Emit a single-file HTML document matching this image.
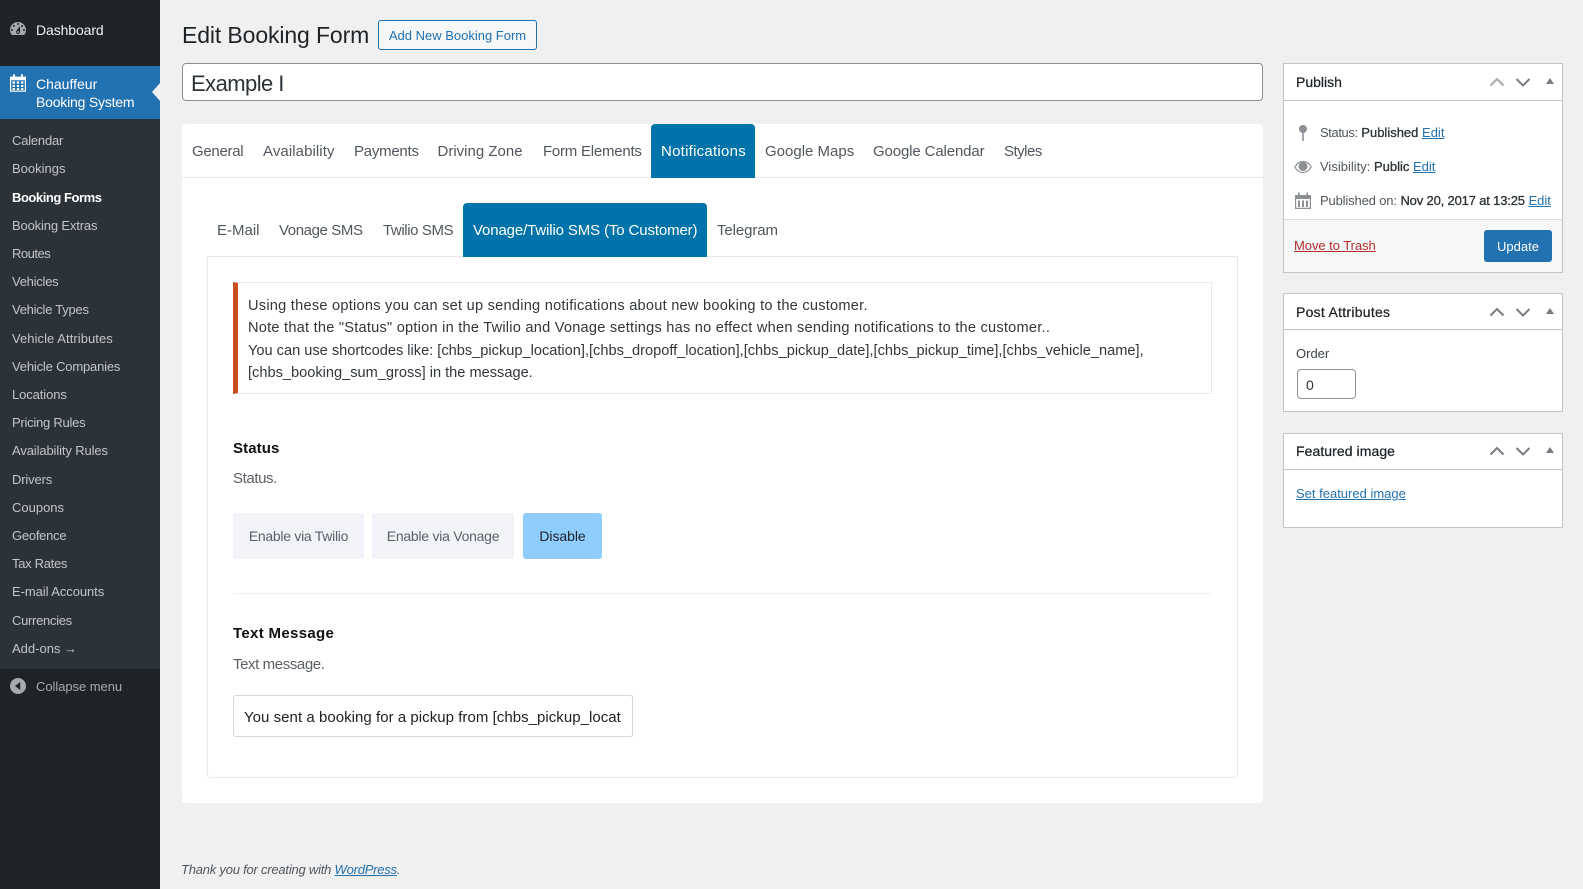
<!DOCTYPE html>
<html lang="en"><head><meta charset="utf-8"><title>Edit Booking Form</title>
<style>
*{box-sizing:border-box}
html,body{margin:0;padding:0}
body{width:1583px;height:889px;overflow:hidden;position:relative;background:#f0f0f1;font-family:"Liberation Sans",Arial,sans-serif;color:#3c434a}
.t{position:absolute;white-space:nowrap;height:20px;line-height:20px}
.b{position:absolute}
.side{font-size:13px;color:#c3c4c7;left:12px}
.tab{font-size:15px;color:#50575e}
.note{font-size:14.6px;color:#32373c;left:248px}
.btn{position:absolute;top:513px;height:46px;line-height:46px;text-align:center;background:#f3f4f9;border-radius:3px;font-size:14px;color:#5b6067}
.box{position:absolute;left:1283px;width:280px;background:#fff;border:1px solid #c3c4c7}
.hd{font-size:14px;color:#1d2327;left:1296px;-webkit-text-stroke:.25px #1d2327}
.m{font-size:13px;color:#50575e;left:1320px}
.m b{font-weight:normal;color:#2c3338;-webkit-text-stroke:.3px #2c3338}
a{color:#2271b1;text-decoration:underline}
svg{position:absolute;display:block}
</style></head><body>

<div class="b" style="left:0;top:0;width:160px;height:889px;background:#1d2327"></div>
<div class="b" style="left:0;top:119px;width:160px;height:550px;background:#2c3338"></div>
<div class="b" style="left:0;top:66px;width:160px;height:53px;background:#2271b1"></div>
<div class="b" style="left:152px;top:83px;width:0;height:0;border:9px solid transparent;border-left:0;border-right:8px solid #f0f0f1"></div>

<svg style="left:8px;top:19px" width="20" height="20" viewBox="0 0 20 20"><path fill="#a7aaad" fill-rule="evenodd" d="M3.76 16h12.48c1.1-1.37 1.76-3.11 1.76-5 0-4.42-3.58-8-8-8s-8 3.58-8 8c0 1.89.66 3.63 1.76 5zM10 4c.55 0 1 .45 1 1s-.45 1-1 1-1-.45-1-1 .45-1 1-1zM6 6c.55 0 1 .45 1 1s-.45 1-1 1-1-.45-1-1 .45-1 1-1zm8 0c.55 0 1 .45 1 1s-.45 1-1 1-1-.45-1-1 .45-1 1-1zm-5.37 5.55L12 7v6c0 1.1-.9 2-2 2s-2-.9-2-2c0-.57.24-1.08.63-1.45zM4 10c.55 0 1 .45 1 1s-.45 1-1 1-1-.45-1-1 .45-1 1-1zm12 0c.55 0 1 .45 1 1s-.45 1-1 1-1-.45-1-1 .45-1 1-1zm-5 3c0-.55-.45-1-1-1s-1 .45-1 1 .45 1 1 1 1-.45 1-1z"/></svg>
<div class="t" style="left:36px;top:20px;font-size:14px;color:#f0f0f1;letter-spacing:-.1px">Dashboard</div>

<svg style="left:10px;top:74px" width="16" height="18" viewBox="0 0 16 18"><path fill="none" stroke="#fff" stroke-width="1.2" d="M.6 3.200h14.800v14H.6z"/><path fill="#fff" d="M.6 3h14.800v3.200H.6zM3.200.3h1.800v3.500H3.200zM11 .3h1.800v3.500H11zM2.600 7.400h2.400v2.400H2.600zM6.800 7.400h2.400v2.400H6.800zM11 7.400h2.400v2.400H11zM2.600 11h2.400v2H2.600zM6.800 11h2.400v2H6.800zM11 11h2.400v2H11zM2.600 14.100h2.400v2H2.600zM6.800 14.100h2.400v2H6.800zM11 14.100h2.400v2H11z"/></svg>
<div class="t" style="left:36px;top:74px;font-size:14px;color:#fff">Chauffeur</div>
<div class="t" style="left:36px;top:92px;font-size:14px;color:#fff;letter-spacing:-.2px">Booking System</div>

<div class="t side" style="top:131px;letter-spacing:-.2px">Calendar</div>
<div class="t side" style="top:159px">Bookings</div>
<div class="t side" style="top:188px;color:#fff;font-weight:bold;letter-spacing:-.45px">Booking Forms</div>
<div class="t side" style="top:216px;letter-spacing:-.15px">Booking Extras</div>
<div class="t side" style="top:244px;letter-spacing:-.5px">Routes</div>
<div class="t side" style="top:272px;letter-spacing:-.25px">Vehicles</div>
<div class="t side" style="top:300px;letter-spacing:-.25px">Vehicle Types</div>
<div class="t side" style="top:329px;letter-spacing:.06px">Vehicle Attributes</div>
<div class="t side" style="top:357px;letter-spacing:-.18px">Vehicle Companies</div>
<div class="t side" style="top:385px;letter-spacing:-.1px">Locations</div>
<div class="t side" style="top:413px;letter-spacing:-.25px">Pricing Rules</div>
<div class="t side" style="top:441px;letter-spacing:-.12px">Availability Rules</div>
<div class="t side" style="top:470px;letter-spacing:-.15px">Drivers</div>
<div class="t side" style="top:498px">Coupons</div>
<div class="t side" style="top:526px;letter-spacing:-.25px">Geofence</div>
<div class="t side" style="top:554px;letter-spacing:-.3px">Tax Rates</div>
<div class="t side" style="top:582px;letter-spacing:-.07px">E-mail Accounts</div>
<div class="t side" style="top:611px;letter-spacing:-.3px">Currencies</div>
<div class="t side" style="top:639px">Add-ons →</div>

<svg style="left:10px;top:678px" width="16" height="16" viewBox="0 0 16 16"><circle cx="8" cy="8" r="8" fill="#a7aaad"/><path fill="#1d2327" d="M10.200 4v8L5 8z"/></svg>
<div class="t" style="left:36px;top:677px;font-size:13px;color:#a7aaad;letter-spacing:-.05px">Collapse menu</div>

<div class="t" style="left:182px;top:20px;height:30px;line-height:30px;font-size:23px;color:#1d2327;letter-spacing:-.12px">Edit Booking Form</div>
<div class="b" style="left:378px;top:20px;width:159px;height:30px;line-height:30px;text-align:center;border:1px solid #2271b1;border-radius:3px;background:#f6f7f7;color:#2271b1;font-size:13px">Add New Booking Form</div>

<div class="b" style="left:182px;top:63px;width:1081px;height:38px;line-height:39px;padding-left:8px;background:#fff;border:1px solid #8c8f94;border-radius:4px;font-size:22px;color:#2c3338;letter-spacing:-.55px">Example I</div>

<div class="b" style="left:182px;top:124px;width:1081px;height:679px;background:#fff;border-radius:4px"></div>
<div class="b" style="left:182px;top:177px;width:1081px;height:1px;background:#e8e8ee"></div>

<div class="b" style="left:651px;top:124px;width:104px;height:54px;background:#0073aa;border-radius:4px 4px 0 0"></div>
<div class="t tab" style="left:192px;top:142px;letter-spacing:-.3px">General</div>
<div class="t tab" style="left:263px;top:142px;letter-spacing:.08px">Availability</div>
<div class="t tab" style="left:354px;top:142px;letter-spacing:-.25px">Payments</div>
<div class="t tab" style="left:437.500px;top:142px">Driving Zone</div>
<div class="t tab" style="left:543px;top:142px;letter-spacing:-.23px">Form Elements</div>
<div class="t tab" style="left:661px;top:142px;color:#fff;letter-spacing:.25px">Notifications</div>
<div class="t tab" style="left:765px;top:142px">Google Maps</div>
<div class="t tab" style="left:873px;top:142px;letter-spacing:-.13px">Google Calendar</div>
<div class="t tab" style="left:1004px;top:142px;letter-spacing:-.5px">Styles</div>

<div class="b" style="left:207px;top:256px;width:1031px;height:522px;border:1px solid #e8e8ee;border-radius:0 0 4px 4px"></div>
<div class="b" style="left:463px;top:203px;width:244px;height:54px;background:#0073aa;border-radius:4px 4px 0 0"></div>
<div class="t tab" style="left:217px;top:221px">E-Mail</div>
<div class="t tab" style="left:279px;top:221px;letter-spacing:-.4px">Vonage SMS</div>
<div class="t tab" style="left:383px;top:221px;letter-spacing:-.4px">Twilio SMS</div>
<div class="t tab" style="left:473px;top:221px;color:#fff;letter-spacing:-.13px">Vonage/Twilio SMS (To Customer)</div>
<div class="t tab" style="left:717px;top:221px;letter-spacing:-.1px">Telegram</div>

<div class="b" style="left:233px;top:282px;width:979px;height:112px;border:1px solid #e8e8ee;border-left:5px solid #c84f1f"></div>
<div class="t note" style="top:296px;letter-spacing:.24px">Using these options you can set up sending notifications about new booking to the customer.</div>
<div class="t note" style="top:318px;letter-spacing:.23px">Note that the "Status" option in the Twilio and Vonage settings has no effect when sending notifications to the customer..</div>
<div class="t note" style="top:341px">You can use shortcodes like: [chbs_pickup_location],[chbs_dropoff_location],[chbs_pickup_date],[chbs_pickup_time],[chbs_vehicle_name],</div>
<div class="t note" style="top:362.500px">[chbs_booking_sum_gross] in the message.</div>

<div class="t" style="left:233px;top:439px;font-size:15px;font-weight:bold;color:#111;letter-spacing:.1px">Status</div>
<div class="t" style="left:233px;top:469px;font-size:15px;color:#5b6067;letter-spacing:-.4px">Status.</div>
<div class="btn" style="left:233px;width:131px;letter-spacing:-.28px">Enable via Twilio</div>
<div class="btn" style="left:372px;width:142px;letter-spacing:-.25px">Enable via Vonage</div>
<div class="btn" style="left:523px;width:79px;background:#90cdff;color:#1d2327;letter-spacing:-.05px">Disable</div>
<div class="b" style="left:233px;top:593px;width:979px;height:1px;background:#eeeef2"></div>

<div class="t" style="left:233px;top:624px;font-size:15px;font-weight:bold;color:#111;letter-spacing:.33px">Text Message</div>
<div class="t" style="left:233px;top:655px;font-size:15px;color:#5b6067;letter-spacing:-.4px">Text message.</div>
<div class="b" style="left:233px;top:695px;width:400px;height:42px;border:1px solid #d5d5e2;border-radius:3px;background:#fff"></div>
<div class="t" style="left:244px;top:708px;width:377px;overflow:hidden;font-size:15px;color:#222;letter-spacing:.04px">You sent a booking for a pickup from [chbs_pickup_location]</div>

<div class="t" style="left:181px;top:860px;font-size:13px;font-style:italic;color:#50575e;letter-spacing:-.22px">Thank you for creating with <a>WordPress</a>.</div>

<!-- Publish -->
<div class="box" style="top:63px;height:210px"></div>
<div class="b" style="left:1284px;top:100px;width:278px;height:1px;background:#c3c4c7"></div>
<div class="b" style="left:1284px;top:219px;width:278px;height:53px;background:#f6f7f7;border-top:1px solid #dcdcde"></div>
<div class="t hd" style="top:72px">Publish</div>
<svg style="left:1489px;top:76px" width="16" height="12" viewBox="0 0 16 12"><path fill="none" stroke="#a7aaad" stroke-width="2" d="M1.500 9.500 8 3l6.500 6.500"/></svg>
<svg style="left:1515px;top:76px" width="16" height="12" viewBox="0 0 16 12"><path fill="none" stroke="#787c82" stroke-width="2" d="M1.500 3 8 9.500 14.500 3"/></svg>
<svg style="left:1546px;top:78px" width="8" height="6" viewBox="0 0 8 6"><path fill="#787c82" d="M4 0l4 6H0z"/></svg>

<svg style="left:1295.500px;top:124px" width="14" height="18" viewBox="0 0 14 18"><circle cx="7" cy="5" r="4" fill="#8c8f94"/><path stroke="#8c8f94" stroke-width="1.600" d="M7 8v9"/></svg>
<svg style="left:1294px;top:160px" width="18" height="14" viewBox="0 0 18 14"><path fill="none" stroke="#8c8f94" stroke-width="1.200" d="M.8 7C3 3.300 6 1.500 9 1.500s6 1.800 8.200 5.500C15 10.700 12 12.500 9 12.500S3 10.700.8 7z"/><circle cx="9" cy="6.500" r="4.500" fill="#8c8f94"/></svg>
<svg style="left:1295px;top:192px" width="16" height="17" viewBox="0 0 16 17"><path fill="#8c8f94" d="M0 3h16v14H0zM1.200 7v8.800h13.600V7zM3 .5h1.600V3H3zM11.400.5H13V3h-1.600zM3 8.500h2V15H3zM7 8.500h2V15H7zM11 8.500h2V15h-2z" fill-rule="evenodd"/></svg>

<div class="t m" style="top:123px"><span style="letter-spacing:-.4px">Status:</span> <b>Published</b> <a>Edit</a></div>
<div class="t m" style="top:157px">Visibility: <b>Public</b> <a>Edit</a></div>
<div class="t m" style="top:191px"><span style="letter-spacing:-.15px">Published on:</span> <b style="letter-spacing:-.17px">Nov 20, 2017 at 13:25</b> <a>Edit</a></div>
<div class="t" style="left:1294px;top:236px;font-size:13px;color:#b32d2e;text-decoration:underline;letter-spacing:-.05px">Move to Trash</div>
<div class="b" style="left:1484px;top:230px;width:68px;height:32px;line-height:33px;text-align:center;background:#2271b1;border-radius:3px;color:#fff;font-size:13px">Update</div>

<!-- Post Attributes -->
<div class="box" style="top:293px;height:119px"></div>
<div class="b" style="left:1284px;top:329px;width:278px;height:1px;background:#c3c4c7"></div>
<div class="t hd" style="top:302px;letter-spacing:.27px">Post Attributes</div>
<svg style="left:1489px;top:306px" width="16" height="12" viewBox="0 0 16 12"><path fill="none" stroke="#787c82" stroke-width="2" d="M1.500 9.500 8 3l6.500 6.500"/></svg>
<svg style="left:1515px;top:306px" width="16" height="12" viewBox="0 0 16 12"><path fill="none" stroke="#787c82" stroke-width="2" d="M1.500 3 8 9.500 14.500 3"/></svg>
<svg style="left:1546px;top:308px" width="8" height="6" viewBox="0 0 8 6"><path fill="#787c82" d="M4 0l4 6H0z"/></svg>
<div class="t" style="left:1296px;top:344px;font-size:13px;color:#3c434a">Order</div>
<div class="b" style="left:1297px;top:369px;width:59px;height:30px;line-height:30px;padding-left:8px;border:1px solid #8c8f94;border-radius:4px;font-size:14px;color:#2c3338;background:#fff">0</div>

<!-- Featured image -->
<div class="box" style="top:433px;height:95px"></div>
<div class="b" style="left:1284px;top:469px;width:278px;height:1px;background:#c3c4c7"></div>
<div class="t hd" style="top:441px;letter-spacing:.07px">Featured image</div>
<svg style="left:1489px;top:445px" width="16" height="12" viewBox="0 0 16 12"><path fill="none" stroke="#787c82" stroke-width="2" d="M1.500 9.500 8 3l6.500 6.500"/></svg>
<svg style="left:1515px;top:445px" width="16" height="12" viewBox="0 0 16 12"><path fill="none" stroke="#787c82" stroke-width="2" d="M1.500 3 8 9.500 14.500 3"/></svg>
<svg style="left:1546px;top:447px" width="8" height="6" viewBox="0 0 8 6"><path fill="#787c82" d="M4 0l4 6H0z"/></svg>
<div class="t" style="left:1296px;top:484px;font-size:13px"><a>Set featured image</a></div>
</body></html>
